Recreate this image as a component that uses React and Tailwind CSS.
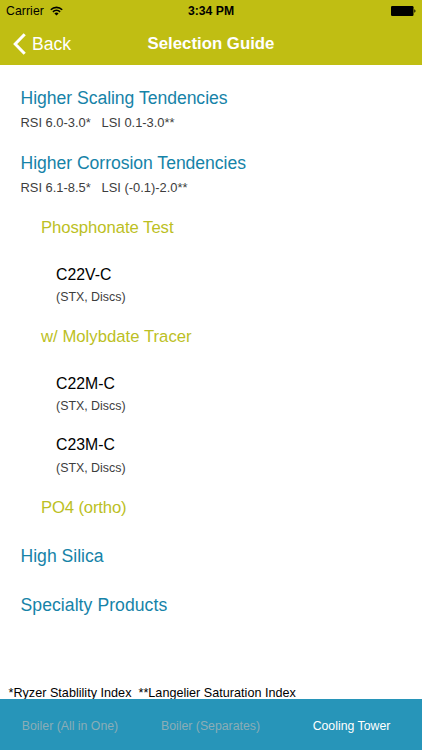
const FONT = "font-['Helvetica_Neue','Liberation_Sans',Arial,sans-serif]";

const styles = {
  head: 'h-5 pl-[20.5px] text-[17.6px] leading-5 text-[#1683a8]',
  range: 'h-4 pl-[20.5px] text-[12.9px] leading-4 text-[#3d3d3d]',
  group: 'h-5 pl-[41px] text-[16.7px] leading-5 text-[#bcbf24]',
  code: 'h-5 pl-[56px] text-[15.8px] leading-5 text-black',
  form: 'h-4 pl-[56px] text-[12.4px] leading-4 text-[#3d3d3d]',
};

const rows = [
  ['head', 'mt-[23px] -tracking-[0.04px]', 'Higher Scaling Tendencies'],
  ['range', 'mt-[7px]', 'RSI 6.0-3.0*   LSI 0.1-3.0**'],
  ['head', 'mt-[22px] -tracking-[0.04px]', 'Higher Corrosion Tendencies'],
  ['range', 'mt-[7px]', 'RSI 6.1-8.5*   LSI (-0.1)-2.0**'],
  ['group', 'mt-[22px] -tracking-[0.05px]', 'Phosphonate Test'],
  ['code', 'mt-[27px]', 'C22V-C'],
  ['form', 'mt-[4px]', '(STX, Discs)'],
  ['group', 'mt-[22px] tracking-[0.02px]', 'w/ Molybdate Tracer'],
  ['code', 'mt-[27px]', 'C22M-C'],
  ['form', 'mt-[4px]', '(STX, Discs)'],
  ['code', 'mt-[21px]', 'C23M-C'],
  ['form', 'mt-[5px]', '(STX, Discs)'],
  ['group', 'mt-[22px] -tracking-[0.15px]', 'PO4 (ortho)'],
  ['head', 'mt-[28px]', 'High Silica'],
  ['head', 'mt-[29px] tracking-[0.06px]', 'Specialty Products'],
];

function StatusBar() {
  return (
    <div className="grid h-[22px] grid-cols-[1fr_auto_1fr] items-center px-[6px] text-[12.2px] leading-[22px] text-black">
      <div className="flex items-center gap-[6px]">
        <span className="tracking-[0.1px]">Carrier</span>
        <svg width="13" height="10" viewBox="0 0 13 10" fill="none" stroke="#000" strokeWidth="1.6">
          <path d="M0.8 3.7C4 .6 9 .6 12.2 3.7" />
          <path d="M2.9 5.9C5 3.9 8 3.9 10.1 5.9" />
          <path d="M6.5 9.4 4.4 7.4C5.6 6.3 7.4 6.3 8.6 7.4Z" fill="#000" stroke="none" />
        </svg>
      </div>
      <span className="font-bold">3:34 PM</span>
      <svg className="justify-self-end" width="25" height="10" viewBox="0 0 25 10">
        <rect width="22.5" height="10" rx="1.2" />
        <path d="M23.3 3.3c1.6.4 1.6 3 0 3.4Z" />
      </svg>
    </div>
  );
}

function NavBar() {
  return (
    <div className="grid h-[43px] grid-cols-[1fr_auto_1fr] items-center px-[13px] text-white">
      <div className="flex items-center gap-[6px]">
        <svg width="13" height="22" viewBox="0 0 13 22" fill="none" stroke="#fff" strokeWidth="3">
          <path d="M11.7 1.2 2.2 11l9.5 9.8" />
        </svg>
        <span className="text-[17.6px] leading-5">Back</span>
      </div>
      <h1 className="text-[16.8px] font-bold leading-5">Selection Guide</h1>
    </div>
  );
}

export default function App() {
  return (
    <div className={`flex h-[750px] w-[422px] flex-col overflow-hidden bg-white ${FONT}`}>
      <header className="h-[65px] shrink-0 bg-[#c0be13]">
        <StatusBar />
        <NavBar />
      </header>
      <main className="flex flex-1 flex-col whitespace-pre">
        {rows.map(([kind, margin, text], i) => (
          <div key={i} className={`${styles[kind]} ${margin} shrink-0`}>
            {text}
          </div>
        ))}
        <p className="mt-auto mb-[-2px] h-4 pl-[8.5px] text-[12.6px] leading-4 tracking-[0.02px] text-black">
          {'*Ryzer Stablility Index  **Langelier Saturation Index'}
        </p>
      </main>
      <nav className="flex h-[51px] shrink-0 items-center bg-[#2795b9] pt-[3px] text-center text-[12.3px] leading-4 text-[#8badb6]">
        <span className="w-[140px]">Boiler (All in One)</span>
        <span className="w-[141px]">Boiler (Separates)</span>
        <span className="w-[141px] text-white">Cooling Tower</span>
      </nav>
    </div>
  );
}
